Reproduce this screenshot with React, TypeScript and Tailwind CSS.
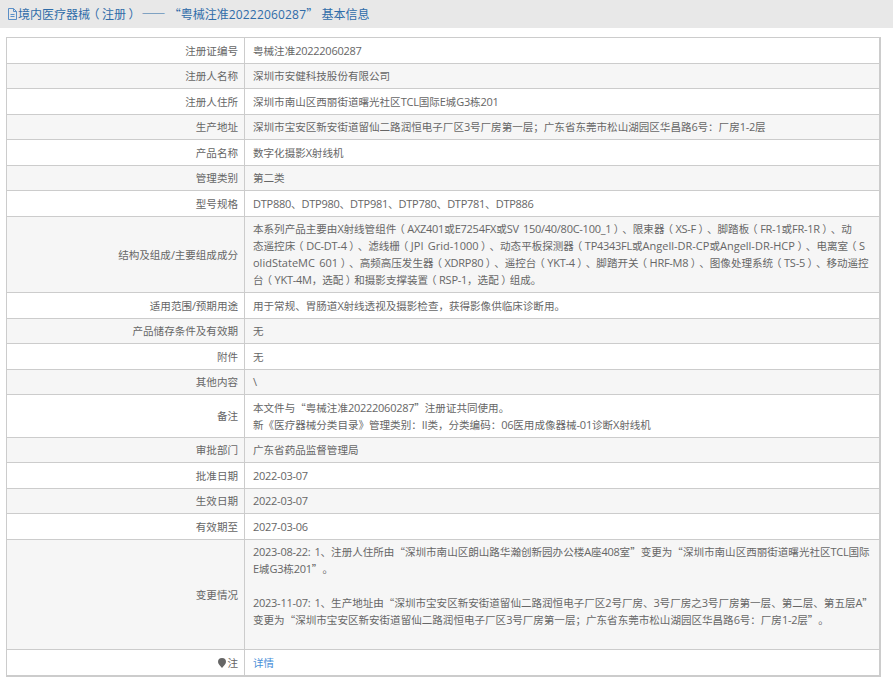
const rows: { label: string; lines: string[]; link?: boolean; pin?: boolean }[] = [
  { label: "注册证编号", lines: ["粤械注准20222060287"] },
  { label: "注册人名称", lines: ["深圳市安健科技股份有限公司"] },
  { label: "注册人住所", lines: ["深圳市南山区西丽街道曙光社区TCL国际E城G3栋201"] },
  { label: "生产地址", lines: ["深圳市宝安区新安街道留仙二路润恒电子厂区3号厂房第一层；广东省东莞市松山湖园区华昌路6号：厂房1-2层"] },
  { label: "产品名称", lines: ["数字化摄影X射线机"] },
  { label: "管理类别", lines: ["第二类"] },
  { label: "型号规格", lines: ["DTP880、DTP980、DTP981、DTP780、DTP781、DTP886"] },
  {
    label: "结构及组成/主要组成成分",
    lines: [
      "本系列产品主要由X射线管组件（AXZ401或E7254FX或SV 150/40/80C-100_1）、限束器（XS-F）、脚踏板（FR-1或FR-1R）、动",
      "态遥控床（DC-DT-4）、滤线栅（JPI Grid-1000）、动态平板探测器（TP4343FL或Angell-DR-CP或Angell-DR-HCP）、电离室（S",
      "olidStateMC 601）、高频高压发生器（XDRP80）、遥控台（YKT-4）、脚踏开关（HRF-M8）、图像处理系统（TS-5）、移动遥控",
      "台（YKT-4M，选配）和摄影支撑装置（RSP-1，选配）组成。",
    ],
  },
  { label: "适用范围/预期用途", lines: ["用于常规、胃肠道X射线透视及摄影检查，获得影像供临床诊断用。"] },
  { label: "产品储存条件及有效期", lines: ["无"] },
  { label: "附件", lines: ["无"] },
  { label: "其他内容", lines: ["\\"] },
  { label: "备注", lines: ["本文件与“粤械注准20222060287”注册证共同使用。", "新《医疗器械分类目录》管理类别：II类，分类编码：06医用成像器械-01诊断X射线机"] },
  { label: "审批部门", lines: ["广东省药品监督管理局"] },
  { label: "批准日期", lines: ["2022-03-07"] },
  { label: "生效日期", lines: ["2022-03-07"] },
  { label: "有效期至", lines: ["2027-03-06"] },
  {
    label: "变更情况",
    lines: [
      "2023-08-22: 1、注册人住所由“深圳市南山区朗山路华瀚创新园办公楼A座408室”变更为“深圳市南山区西丽街道曙光社区TCL国际",
      "E城G3栋201”。",
      "\u00a0",
      "2023-11-07: 1、生产地址由“深圳市宝安区新安街道留仙二路润恒电子厂区2号厂房、3号厂房之3号厂房第一层、第二层、第五层A”",
      "变更为“深圳市宝安区新安街道留仙二路润恒电子厂区3号厂房第一层；广东省东莞市松山湖园区华昌路6号：厂房1-2层”。",
      "\u00a0",
    ],
  },
  { label: "注", lines: ["详情"], link: true, pin: true },
];

// latin runs use Open Sans; fullwidth parens are halved with halt and padded so the glyph sits mid box
function Mixed({ text, head }: { text: string; head?: boolean }) {
  const parts = text.split(/([\x20-\x7e]+|（|）)/).filter(Boolean);
  return (
    <>
      {parts.map((part, i) => {
        if (part === "（")
          return (
            <span key={i} className={head ? "pl-[3.5px] pr-[2.5px] [font-feature-settings:'halt']" : "pl-[3.2px] pr-[2.5px] [font-feature-settings:'halt']"}>
              {part}
            </span>
          );
        if (part === "）")
          return (
            <span key={i} className={head ? "pl-[2.5px] pr-[3.5px] [font-feature-settings:'halt']" : "pl-[2.5px] pr-[3.2px] [font-feature-settings:'halt']"}>
              {part}
            </span>
          );
        if (/^[\x20-\x7e]+$/.test(part)) {
          if (head)
            return (
              <span key={i} className="font-['Open_Sans'] text-[12px] tracking-[0.18px]">
                {part}
              </span>
            );
          return (
            <span
              key={i}
              className={/[a-z]/.test(part) ? "font-['Open_Sans'] text-[11px] [word-spacing:1.5px]" : "font-['Open_Sans'] text-[11px] tracking-[-0.26px] [word-spacing:1.5px]"}
            >
              {part}
            </span>
          );
        }
        return <span key={i}>{part}</span>;
      })}
    </>
  );
}

function DocIcon() {
  return (
    <svg width="11" height="12" viewBox="0 0 11 12" fill="none" stroke="#5b8fc7" strokeWidth="1" className="shrink-0">
      <path d="M1.500 11.500V.5h5l3 3v8z" />
      <path d="M6.500.5v3h3M3.500 6.500h4M3.500 8.500h4" />
    </svg>
  );
}

function PinIcon() {
  return (
    <svg width="8" height="10" viewBox="0 0 8 10" fill="#666" className="mr-[1px] inline-block align-[-1px]">
      <path d="M4 0a4 4 0 0 1 4 4c0 2-2.500 4.200-4 6C2.500 8.200 0 6 0 4a4 4 0 0 1 4-4z" />
    </svg>
  );
}

export default function App() {
  return (
    <div
      lang="zh-CN"
      className="h-[686px] w-[895px] overflow-hidden bg-white font-['Noto_Sans_CJK_SC','Open_Sans',sans-serif] text-[10.55px] leading-[17px] text-[#666] [text-spacing-trim:space-all]"
    >
      <div className="flex h-[28px] w-[893px] items-center bg-[#e8e8e8] pl-[7px] text-[12px] text-[#2f6ca8]">
        <DocIcon />
        <span>
          <Mixed head text="境内医疗器械（注册） —— “粤械注准20222060287” 基本信息" />
        </span>
      </div>
      <table className="mt-[9px] ml-[6px] w-[875px] table-fixed border-collapse border-t border-r-2 border-b-2 border-l border-[#ccc]">
        <colgroup>
          <col className="w-[238px]" />
          <col />
        </colgroup>
        <tbody>
          {rows.map((row, i) => (
            <tr key={row.label} className={i % 2 === 1 ? "bg-[#f6f6f6]" : "bg-white"}>
              <td className="border border-[#ccc] px-[6px] py-[3.75px] text-right">
                {row.pin && <PinIcon />}
                <Mixed text={row.label} />
              </td>
              <td className="border border-[#ccc] px-[8px] py-[3.75px]">
                {row.lines.map((line, j) =>
                  row.link ? (
                    <span key={j} className="text-[#4a90d9]">
                      {line}
                    </span>
                  ) : (
                    <div key={j} className="whitespace-nowrap">
                      <Mixed text={line} />
                    </div>
                  ),
                )}
              </td>
            </tr>
          ))}
        </tbody>
      </table>
    </div>
  );
}
